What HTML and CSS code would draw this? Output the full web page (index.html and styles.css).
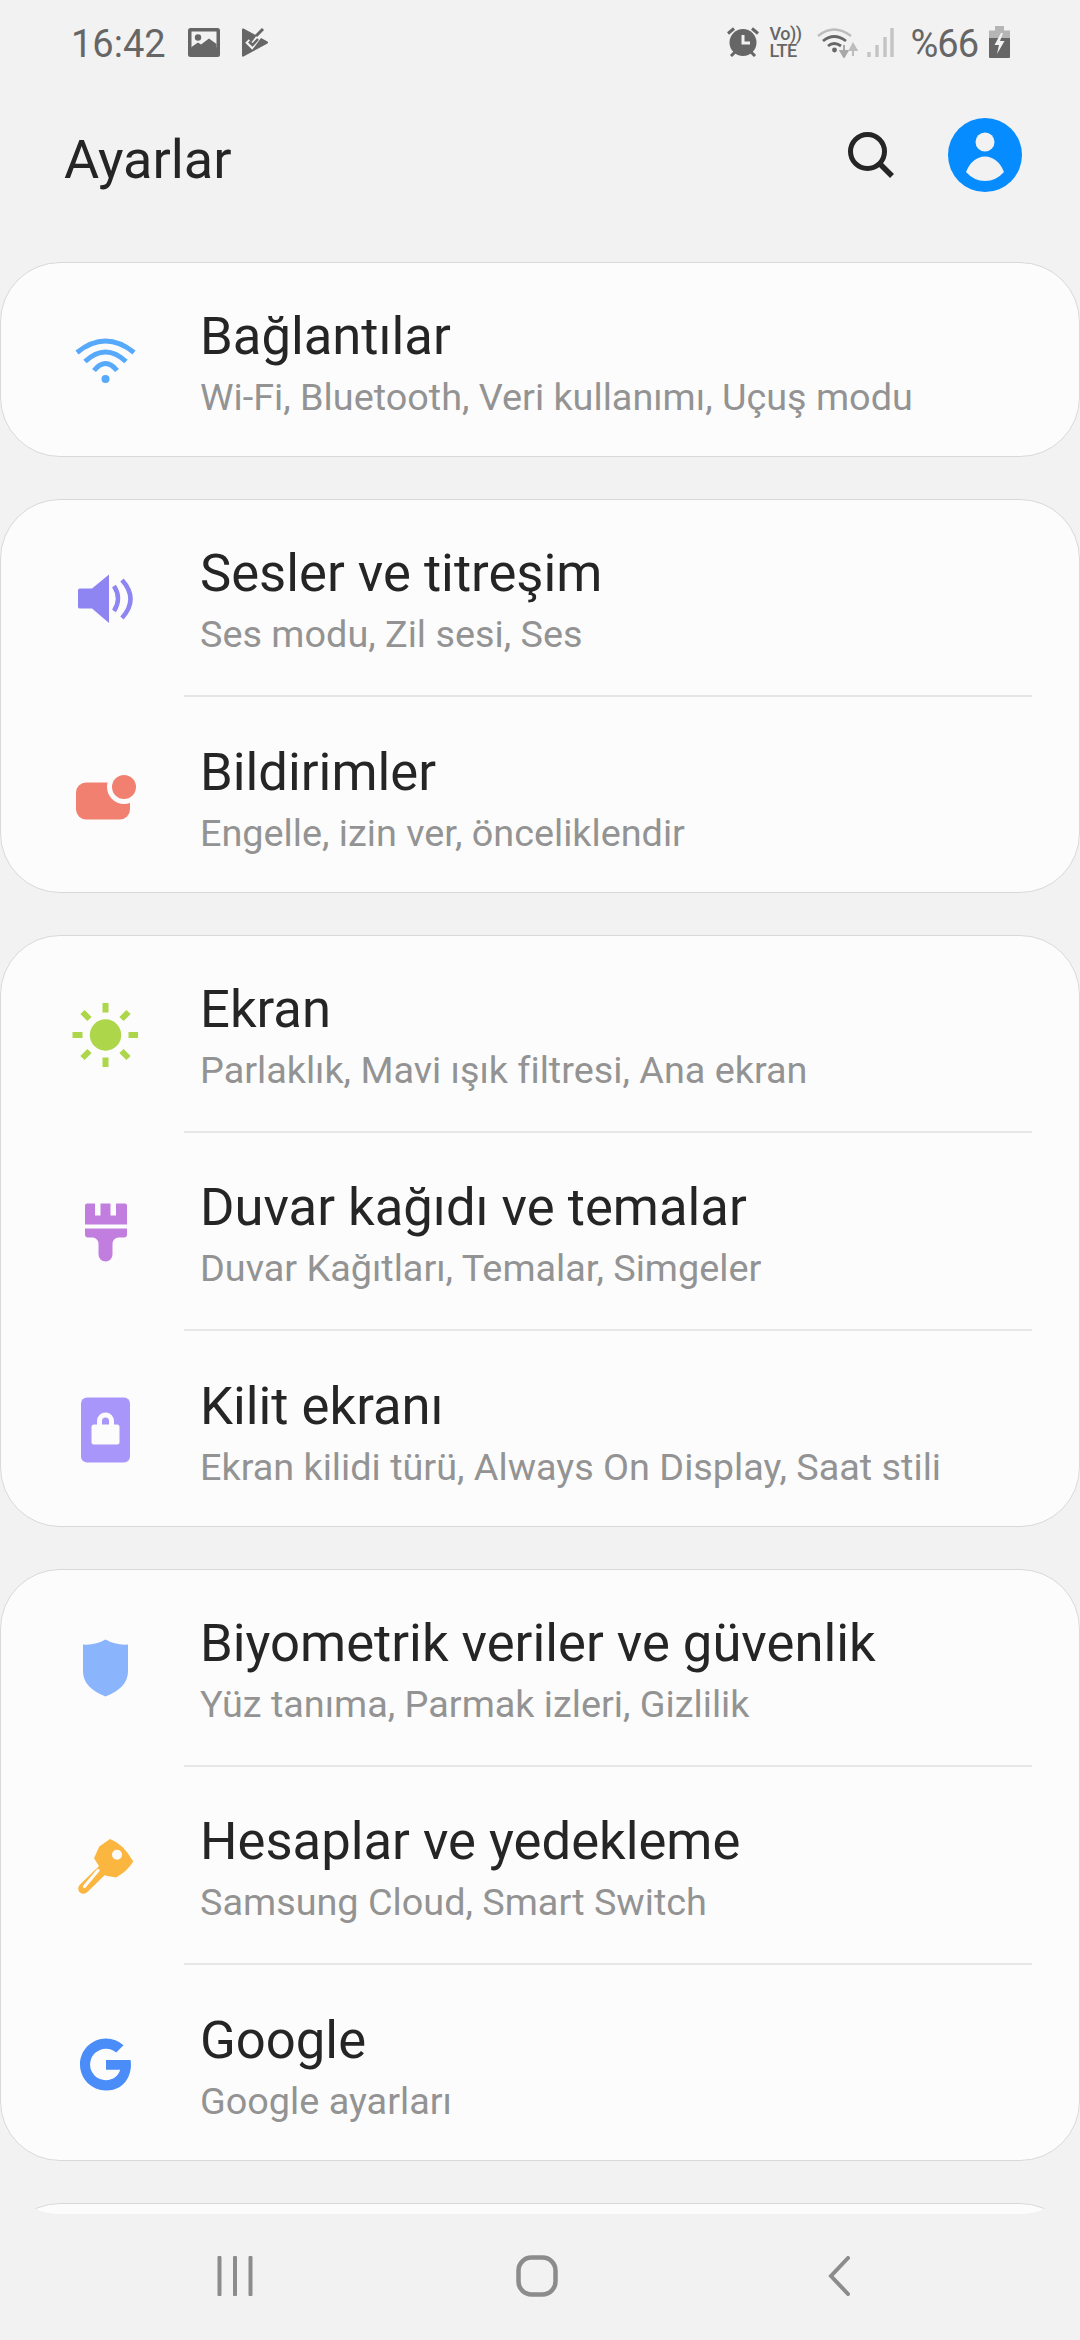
FILE: index.html
```html
<!DOCTYPE html>
<html lang="tr">
<head>
  <meta charset="UTF-8">
  <title>Ayarlar</title>
  <meta name="viewport" content="width=device-width, initial-scale=1.0">
  <link rel="stylesheet" href="styles.css">
</head>
<body>
  <div class="status-bar">
    <div class="status-left">
      <span class="status-text">16:42</span>
      <svg class="st-gallery" viewBox="0 0 32 29">
        <rect width="32" height="29" rx="2.500" fill="#666"/>
        <rect x="3.500" y="3.500" width="25" height="16" fill="#f2f2f2"/>
        <circle cx="10" cy="9.500" r="3.200" fill="#666"/>
        <path d="M3.500 19 L10 14.500 L13 16.500 L21 10.500 L28.500 16 V22 H3.500 Z" fill="#666"/>
      </svg>
      <svg class="st-tasks" viewBox="0 0 26 29">
        <path d="M0 1.500 Q0 0 1.500 .600 L25.500 13.500 Q26.500 14.500 25.500 15.500 L1.500 28.600 Q0 29 0 27.500 Z" fill="#666"/>
        <path d="M5 13 L10 18 L21 3" fill="none" stroke="#f2f2f2" stroke-width="5"/>
        <path d="M14 8 L21 1" fill="none" stroke="#666" stroke-width="3"/>
        <path d="M7 13.500 L10.500 17 L16 11" fill="none" stroke="#666" stroke-width="2.500"/>
      </svg>
    </div>
    <div class="status-right">
      <svg class="st-alarm" viewBox="0 0 32 30">
        <circle cx="16" cy="15.500" r="13.500" fill="#666"/>
        <path d="M16 8 V16 H23" fill="none" stroke="#f2f2f2" stroke-width="3"/>
        <path d="M1 6.500 L7 1.500 M31 6.500 L25 1.500 M4 29 L8 25 M28 29 L24 25" stroke="#666" stroke-width="3"/>
      </svg>
      <div class="st-volte"><span>Vo))</span><span>LTE</span></div>
      <svg class="st-wifi" viewBox="0 0 41 32">
        <path d="M1 10 Q17 -3 34 10" fill="none" stroke="#bdbdbd" stroke-width="2.600"/>
        <path d="M6 15 Q17 6 29 15" fill="none" stroke="#666" stroke-width="2.800"/>
        <path d="M11 20 Q17 15 24 20" fill="none" stroke="#666" stroke-width="2.800"/>
        <circle cx="17.500" cy="24" r="2.400" fill="#666"/>
        <path d="M27 19 V28 M23.500 25 L27 31 L30.500 25 Z" stroke="#a8a8a8" stroke-width="2" fill="#a8a8a8"/>
        <path d="M36 30 V21 M33 24 L36 18 L39.500 24 Z" stroke="#bdbdbd" stroke-width="2" fill="#bdbdbd"/>
      </svg>
      <svg class="st-signal" viewBox="0 0 27 30">
        <path d="M2 30 V25 M10 30 V18 M18 30 V10 M25 30 V1" stroke="#c4c4c4" stroke-width="3.400" fill="none"/>
      </svg>
      <span class="status-text status-battery">%66</span>
      <svg class="st-battery" viewBox="0 0 21 32">
        <path d="M6 0 H15 V4.500 H21 V32 H0 V4.500 H6 Z" fill="#b5b5b5"/>
        <path d="M0 12 H21 V30.500 Q21 32 19.500 32 H1.500 Q0 32 0 30.500 Z" fill="#666"/>
        <path d="M12 7 L5.500 19 H10 L8 28 L15.500 15 H11 L14 7 Z" fill="#f2f2f2"/>
      </svg>
    </div>
  </div>

  <div class="app-header">
    <h1 class="app-title">Ayarlar</h1>
    <svg class="search-icon" viewBox="0 0 46 46">
      <circle cx="19.500" cy="19.500" r="17" fill="none" stroke="#252525" stroke-width="5"/>
      <path d="M32 32 L44 44" stroke="#252525" stroke-width="5.500"/>
    </svg>
    <svg class="avatar" viewBox="0 0 74 74">
      <circle cx="37" cy="37" r="37" fill="#068cfe"/>
      <circle cx="37" cy="24" r="9.500" fill="#f2f2f2"/>
      <path d="M18 54 Q24 39 37 38.500 Q50 39 56 54 Q48 63 37 63 Q26 63 18 54 Z" fill="#f2f2f2"/>
    </svg>
  </div>

  <div class="settings-list">
    <div class="card">
      <div class="row">
        <svg class="row-icon" viewBox="0 1.500 80 80">
          <g fill="none" stroke="#57a9fb" stroke-width="5">
            <path d="M12 31 Q40.500 8 69 31"/>
            <path d="M20 40 Q40.500 21 61 40"/>
            <path d="M29 49 Q40.500 35 52 49"/>
          </g>
          <circle cx="40.500" cy="57.500" r="4" fill="#57a9fb"/>
        </svg>
        <div class="row-text">
          <div class="row-title">Bağlantılar</div>
          <div class="row-sub">Wi-Fi, Bluetooth, Veri kullanımı, Uçuş modu</div>
        </div>
      </div>
    </div>

    <div class="card">
      <div class="row">
        <svg class="row-icon" viewBox="0 0 80 80">
          <path d="M13 30 Q13 28.500 15 28.500 H27 L44 14.500 V63 L27 48.500 H15 Q13 48.500 13 47 Z" fill="#8e85f2"/>
          <path d="M49 26 Q57 38.500 49 51 M57 20 Q74 39 57 58" fill="none" stroke="#8e85f2" stroke-width="4.500"/>
        </svg>
        <div class="row-text">
          <div class="row-title">Sesler ve titreşim</div>
          <div class="row-sub">Ses modu, Zil sesi, Ses</div>
        </div>
      </div>
      <div class="divider"></div>
      <div class="row">
        <svg class="row-icon" viewBox="0 2.500 80 80">
          <rect x="11" y="26" width="54" height="37" rx="10" fill="#f28070"/>
          <circle cx="59" cy="30.500" r="17" fill="#fcfcfc"/>
          <circle cx="59" cy="30.500" r="12" fill="#f28070"/>
        </svg>
        <div class="row-text">
          <div class="row-title">Bildirimler</div>
          <div class="row-sub">Engelle, izin ver, önceliklendir</div>
        </div>
      </div>
    </div>

    <div class="card">
      <div class="row">
        <svg class="row-icon" viewBox="0 0 80 80">
          <circle cx="40.500" cy="39" r="15.700" fill="#aed64a"/>
          <path d="M40.500 7 V16.500 M40.500 61.500 V71 M7.500 39 H17.500 M63.500 39 H73 M24.500 23 L17.500 16 M56.500 23 L63.500 16 M24.500 55 L17.500 62 M56.500 55 L63.500 62" stroke="#aed64a" stroke-width="6" fill="none"/>
        </svg>
        <div class="row-text">
          <div class="row-title">Ekran</div>
          <div class="row-sub">Parlaklık, Mavi ışık filtresi, Ana ekran</div>
        </div>
      </div>
      <div class="divider"></div>
      <div class="row">
        <svg class="row-icon" viewBox="0 2.500 80 80">
          <path d="M20 14 Q20 12 22 12 H30 V24 H35.500 V12 H45.500 V24 H51 V12 H60 Q62 12 62 14 V33 H20 Z" fill="#c27ede"/>
          <path d="M20 37 H62 V43 Q62 46 59 46 H53 Q48 47 47.500 52 V63 A7 7 0 0 1 33.500 63 V52 Q33 47 28 46 H23 Q20 46 20 43 Z" fill="#c27ede"/>
        </svg>
        <div class="row-text">
          <div class="row-title">Duvar kağıdı ve temalar</div>
          <div class="row-sub">Duvar Kağıtları, Temalar, Simgeler</div>
        </div>
      </div>
      <div class="divider"></div>
      <div class="row">
        <svg class="row-icon" viewBox="0 4.500 80 80">
          <rect x="16" y="9" width="49" height="65" rx="6" fill="#a996fb"/>
          <rect x="26.500" y="36" width="28" height="20" rx="2.500" fill="#fcfcfc"/>
          <path d="M34.500 38 V32.500 A6 6 0 0 1 46.500 32.500 V38" fill="none" stroke="#fcfcfc" stroke-width="5"/>
        </svg>
        <div class="row-text">
          <div class="row-title">Kilit ekranı</div>
          <div class="row-sub">Ekran kilidi türü, Always On Display, Saat stili</div>
        </div>
      </div>
    </div>

    <div class="card">
      <div class="row">
        <svg class="row-icon" viewBox="0 .5 80 80">
          <path d="M40.500 10 Q30 16 18 15 V42 Q18 58 40.500 67 Q63 58 63 42 V15 Q51 16 40.500 10 Z" fill="#8ab4fb"/>
        </svg>
        <div class="row-text">
          <div class="row-title">Biyometrik veriler ve güvenlik</div>
          <div class="row-sub">Yüz tanıma, Parmak izleri, Gizlilik</div>
        </div>
      </div>
      <div class="divider"></div>
      <div class="row">
        <svg class="row-icon" viewBox="0 2.500 80 80">
          <path d="M38 44 L18.500 63" stroke="#fbb640" stroke-width="10.500" stroke-linecap="round"/>
          <path d="M45 13.500 Q58 18 68.300 36 Q62 46 51 52 L40 50 L29 32.700 L34.300 21 Z" fill="#fbb640"/>
          <path d="M33 45 L19.500 61" stroke="#fcfcfc" stroke-width="3.200" stroke-linecap="round"/>
          <circle cx="52" cy="29.300" r="5" fill="#fcfcfc"/>
        </svg>
        <div class="row-text">
          <div class="row-title">Hesaplar ve yedekleme</div>
          <div class="row-sub">Samsung Cloud, Smart Switch</div>
        </div>
      </div>
      <div class="divider"></div>
      <div class="row">
        <svg class="row-icon" viewBox="0 2.500 80 80">
          <path transform="translate(8.400 8.800) scale(2.600)" d="M12.545 10.239v3.821h5.445c-.712 2.315-2.647 3.972-5.445 3.972a6.033 6.033 0 110-12.064c1.498 0 2.866.549 3.921 1.453l2.814-2.814A9.969 9.969 0 0012.545 2C7.021 2 2.543 6.477 2.543 12s4.478 10 10.002 10c8.396 0 10.249-7.85 9.426-11.748l-9.426-.013z" fill="#4a8cf8"/>
        </svg>
        <div class="row-text">
          <div class="row-title">Google</div>
          <div class="row-sub">Google ayarları</div>
        </div>
      </div>
    </div>

    <div class="card card-next"></div>
  </div>

  <div class="nav-bar">
    <svg class="nav-recents" viewBox="0 0 36 40">
      <path d="M2.500 1.500 V38.500 M18 1.500 V38.500 M33.500 1.500 V38.500" stroke="#8c8c8c" stroke-width="4" stroke-linecap="round"/>
    </svg>
    <svg class="nav-home" viewBox="0 0 42 42">
      <rect x="2.500" y="2.500" width="37" height="37" rx="13" fill="none" stroke="#8c8c8c" stroke-width="4.500"/>
    </svg>
    <svg class="nav-back" viewBox="0 0 24 40">
      <path d="M20 2 L3 20 L20 38" fill="none" stroke="#8c8c8c" stroke-width="4" stroke-linecap="round"/>
    </svg>
  </div>
</body>
</html>
```

FILE: styles.css
```css
html, body {
  margin: 0;
  padding: 0;
}
body {
  width: 1080px;
  height: 2340px;
  overflow: hidden;
  display: flex;
  flex-direction: column;
  background: #f2f2f2;
  font-family: Roboto, sans-serif;
}

/* status bar */
.status-bar {
  height: 84px;
  flex: none;
  display: flex;
  justify-content: space-between;
  align-items: center;
  padding: 0 70px 0 71px;
}
.status-left, .status-right {
  display: flex;
  align-items: center;
}
.status-text {
  padding-top: 4px;
  font-size: 38px;
  color: #666;
}
.status-battery {
  letter-spacing: -1px;
}
.st-gallery {
  width: 32px;
  height: 29px;
  margin-left: 22px;
}
.st-tasks {
  width: 26px;
  height: 29px;
  margin-left: 22px;
}
.st-alarm {
  width: 32px;
  height: 30px;
}
.st-volte {
  width: 32px;
  margin: 0 16px 0 10px;
  display: flex;
  flex-direction: column;
  font-size: 18px;
  line-height: 17px;
  font-weight: 500;
  letter-spacing: -0.5px;
  color: #666;
  white-space: nowrap;
}
.st-wifi {
  width: 41px;
  height: 32px;
}
.st-signal {
  width: 27px;
  height: 30px;
  margin: 0 16px 0 9px;
}
.st-battery {
  width: 21px;
  height: 32px;
  margin-left: 11px;
}

/* header */
.app-header {
  height: 142px;
  flex: none;
  display: flex;
  align-items: center;
  padding: 0 58px 0 64px;
}
.app-title {
  flex: 1;
  margin: 0;
  padding-top: 9px;
  font-size: 54px;
  font-weight: 400;
  color: #252525;
}
.search-icon {
  width: 46px;
  height: 46px;
  margin-right: 54px;
}
.avatar {
  width: 74px;
  height: 74px;
}

/* list */
.settings-list {
  flex: 1;
  overflow: hidden;
  padding-top: 36px;
  display: flex;
  flex-direction: column;
  gap: 42px;
  border-radius: 0 0 60px 60px;
}
.card {
  flex: none;
  background: #fcfcfc;
  border: 1px solid #d9d9d9;
  border-radius: 60px;
}
.card-next {
  height: 193px;
}
.row {
  padding: 43px 0 36px 64px;
  display: flex;
  align-items: center;
}
.row-icon {
  width: 80px;
  height: 80px;
  flex: none;
  margin-right: 55px;
}
.row-title {
  font-size: 52.6px;
  line-height: 60px;
  color: #252525;
}
.row-sub {
  font-size: 37.8px;
  line-height: 46px;
  margin-top: 8px;
  color: #939393;
}
.divider {
  height: 2px;
  margin: 2px 47px 1.5px 183px;
  background: #e6e6e6;
}

/* bottom nav */
.nav-bar {
  height: 126px;
  flex: none;
  position: relative;
  background: #f2f2f2;
}
.nav-bar svg {
  position: absolute;
}
.nav-recents {
  left: 217px;
  top: 42px;
  width: 36px;
  height: 40px;
}
.nav-home {
  left: 516px;
  top: 41px;
  width: 42px;
  height: 42px;
}
.nav-back {
  left: 828px;
  top: 42px;
  width: 24px;
  height: 40px;
}
```
